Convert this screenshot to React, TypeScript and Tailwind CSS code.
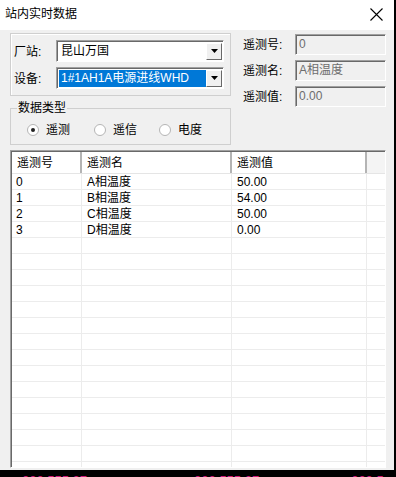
import React from "react";

const font = { fontFamily: '"Liberation Sans", "Noto Sans CJK SC", sans-serif' };

const rows = [
  { id: "0", name: "A相温度", value: "50.00" },
  { id: "1", name: "B相温度", value: "54.00" },
  { id: "2", name: "C相温度", value: "50.00" },
  { id: "3", name: "D相温度", value: "0.00" },
];

const DropButton = () => (
  <div className="w-[16px] h-[17px] bg-[#f0f0f0] border border-t-white border-l-white border-b-[#696969] border-r-[#696969] flex items-center justify-center">
    <svg width="7" height="4" viewBox="0 0 7 4">
      <path d="M0 0h7L3.5 4z" fill="#000" />
    </svg>
  </div>
);

const Combo = ({ text, selected }: { text: string; selected?: boolean }) => (
  <div className="w-[168px] h-[22px] bg-white border border-t-[#a0a0a0] border-l-[#a0a0a0] border-b-white border-r-white shadow-[inset_1px_1px_0_#696969] flex items-center pl-[2px] pr-[1px]">
    <div className="flex-1 h-[17px] flex items-center">
      <span
        className={
          selected
            ? "bg-[#0078d7] text-white w-[147px] h-[17px] leading-[17px] pl-[2px]"
            : "text-black pl-[2px] leading-[17px]"
        }
      >
        {text}
      </span>
    </div>
    <DropButton />
  </div>
);

const Field = ({ label, value }: { label: string; value: string }) => (
  <div className="flex items-center h-[21px]">
    <span className="w-[52px]">{label}</span>
    <div className="w-[91px] h-[21px] bg-[#f0f0f0] border border-t-[#a0a0a0] border-l-[#a0a0a0] border-b-white border-r-white shadow-[inset_1px_1px_0_#696969] pl-[3px] leading-[19px] text-[#6d6d6d]">
      {value}
    </div>
  </div>
);

const Radio = ({ label, checked, w }: { label: string; checked?: boolean; w: string }) => (
  <div className={`flex items-center gap-[7px] ${w}`}>
    <svg width="12" height="12" viewBox="0 0 12 12">
      <circle cx="6" cy="6" r="5.5" fill="#fff" stroke="#b4b4b4" />
      {checked && <circle cx="6" cy="6" r="2" fill="#222" />}
    </svg>
    <span>{label}</span>
  </div>
);

export default function App() {
  const filler = Array.from({ length: 16 });
  return (
    <div className="w-[396px] h-[477px] bg-black overflow-hidden text-[12px] text-black" style={font}>
      <div className="w-[394px] h-[470px] bg-[#f0f0f0] flex flex-col">
        {/* title bar */}
        <div className="h-[30px] bg-white flex items-center justify-between pl-[5px] pr-[11px] pb-[2px]">
          <span className="text-[12px]">站内实时数据</span>
          <svg width="13" height="13" viewBox="0 0 13 13">
            <path d="M0.5 0.5l12 12M12.5 0.5l-12 12" stroke="#000" strokeWidth="1.1" />
          </svg>
        </div>

        <div className="flex flex-col pl-[10px] pr-[8px]">
          <div className="flex mt-[3px]">
            {/* left column */}
            <div className="w-[221px] flex flex-col">
              <div className="h-[63px] border border-[#cfcfcf] shadow-[inset_1px_1px_0_#fff] flex flex-col pt-[6px] pl-[3px] gap-[5px]">
                <div className="flex items-center">
                  <span className="w-[42px] pt-[2px]">厂站:</span>
                  <Combo text="昆山万国" />
                </div>
                <div className="flex items-center">
                  <span className="w-[42px] pt-[2px]">设备:</span>
                  <Combo text="1#1AH1A电源进线WHD" selected />
                </div>
              </div>
              <fieldset className="mt-[4px] h-[45px] border border-[#cfcfcf] px-[6px] pb-0 pt-0">
                <legend className="px-[1px] leading-[16px]">数据类型</legend>
                <div className="flex items-center h-[16px] mt-[6px] pl-[10px]">
                  <Radio label="遥测" checked w="w-[67px]" />
                  <Radio label="遥信" w="w-[65px]" />
                  <Radio label="电度" w="w-[60px]" />
                </div>
              </fieldset>
            </div>

            {/* right column */}
            <div className="ml-[12px] mt-[1px] flex flex-col gap-[5px]">
              <Field label="遥测号:" value="0" />
              <Field label="遥测名:" value="A相温度" />
              <Field label="遥测值:" value="0.00" />
            </div>
          </div>

          {/* list */}
          <div className="mt-[5px] w-[376px] h-[318px] bg-white border border-t-[#a0a0a0] border-l-[#a0a0a0] border-b-white border-r-white shadow-[inset_1px_1px_0_#696969] pt-[1px] pl-[1px] overflow-hidden">
            <div className="flex h-[22px] border-b border-[#e5e5e5] leading-[23px]">
              <div className="w-[70px] pl-[5px] border-r-2 border-[#b4b4b4]">遥测号</div>
              <div className="w-[150px] pl-[5px] border-r-2 border-[#b4b4b4]">遥测名</div>
              <div className="w-[135px] pl-[5px] border-r-2 border-[#b4b4b4]">遥测值</div>
              <div className="flex-1 bg-[#f4f4f4]" />
            </div>
            {rows.map((r) => (
              <div key={r.id} className="flex h-[16px] border-b border-[#ececec] leading-[17px]">
                <div className="w-[70px] pl-[4px] border-r border-[#ececec]">{r.id}</div>
                <div className="w-[150px] pl-[5px] border-r border-[#ececec]">{r.name}</div>
                <div className="w-[135px] pl-[5px] border-r border-[#ececec]">{r.value}</div>
                <div className="flex-1" />
              </div>
            ))}
            {filler.map((_, i) => (
              <div key={i} className="flex h-[16px] border-b border-[#ececec]">
                <div className="w-[70px] border-r border-[#ececec]" />
                <div className="w-[150px] border-r border-[#ececec]" />
                <div className="w-[135px] border-r border-[#ececec]" />
                <div className="flex-1" />
              </div>
            ))}
          </div>
        </div>
      </div>
      <div className="h-[7px] overflow-hidden flex text-[13px] text-[#d0197a] leading-[16px] pt-[3px]">
        <span className="ml-[22px]">000.555.37</span>
        <span className="ml-[107px]">000.555.37</span>
        <span className="ml-[92px]">000.5</span>
      </div>
    </div>
  );
}
